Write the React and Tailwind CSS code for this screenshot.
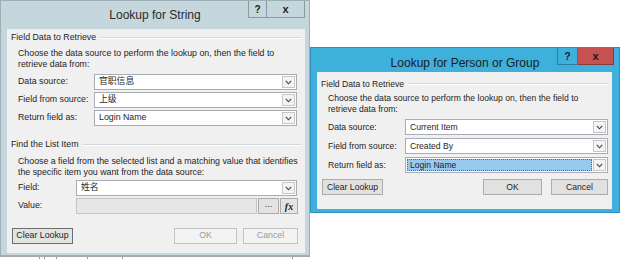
import React from 'react'

const sans = "font-['Liberation_Sans','Noto_Sans_CJK_SC',sans-serif]"

function Chevron() {
  return (
    <svg width="7" height="5" viewBox="0 0 7 5">
      <polyline points="0.8,0.8 3.5,3.8 6.2,0.8" fill="none" stroke="#404040" strokeWidth="1.1" />
    </svg>
  )
}

function Combo({ value, selected }) {
  return (
    <div className="flex-1 h-[16px] flex border border-[#a9acb2] bg-white">
      <div className="flex-1 flex items-center p-[1px]">
        <span
          className={
            selected
              ? 'h-full w-full flex items-center pl-[2px] bg-[#98c9f0] border border-dotted border-[#3d6f99]'
              : 'pl-[3px]'
          }
        >
          {value}
        </span>
      </div>
      <div className="w-[13px] my-[1px] mr-[1px] border border-[#c6c6c6] bg-[#f4f4f4] flex items-center justify-center">
        <Chevron />
      </div>
    </div>
  )
}

function Row({ label, labelW, children }) {
  return (
    <div className="h-[16px] flex items-center">
      <span className={`${labelW} shrink-0`}>{label}</span>
      {children}
    </div>
  )
}

function GroupHeader({ title }) {
  return (
    <div className="h-[12px] flex items-center gap-[4px]">
      <span className="whitespace-nowrap">{title}</span>
      <div className="flex-1 border-t border-[#d5d9dc] border-b border-b-white" />
    </div>
  )
}

function Btn({ children, w, kind }) {
  const look =
    kind === 'disabled'
      ? 'bg-[#f3f3f3] border-[#c3c3c3] text-[#9a9a9a]'
      : kind === 'focus'
        ? 'bg-[#e3e3e3] border-[#6e6e6e]'
        : 'bg-[#e1e1e1] border-[#acacac]'
  return <div className={`${w} h-[16px] border flex items-center justify-center ${look}`}>{children}</div>
}

function CaptionButtons({ active }) {
  return (
    <div className="flex items-start">
      <div
        className={`h-[17px] flex items-center justify-center border border-t-0 text-[10px] font-bold text-[#1a1a1a] ${
          active ? 'w-[21px] bg-[#3db0dc] border-[#2a7ea6]' : 'w-[19px] bg-[#c5d7dd] border-[#8a9ca3]'
        }`}
      >
        ?
      </div>
      <div
        className={`h-[17px] flex items-center justify-center border border-t-0 border-l-0 text-[11px] font-bold text-[#1a1a1a] ${
          active ? 'w-[36px] bg-[#c75050] border-[#8c3636]' : 'w-[38px] bg-[#c5d7dd] border-[#8a9ca3]'
        }`}
      >
        x
      </div>
    </div>
  )
}

function StringDialog() {
  return (
    <div className="w-[310px] h-[256px] bg-[#c5d7dd] border border-[#9cb0b7] flex flex-col">
      <div className="h-[28px] grid grid-cols-[1fr_auto_1fr]">
        <div />
        <div className="self-center text-[12px] text-[#2a2a2a]">Lookup for String</div>
        <div className="flex justify-end pr-[4px]">
          <CaptionButtons />
        </div>
      </div>
      <div className="flex-1 ml-[6px] mr-[4px] mb-[2px] bg-[#f0f0f0] flex flex-col text-[8.8px] text-[#1e1e1e]">
        <div className="mt-[3px] pl-[4px] pr-[3px]">
          <GroupHeader title="Field Data to Retrieve" />
        </div>
        <div className="mt-[4px] pl-[11px] leading-[11px] whitespace-nowrap">
          Choose the data source to perform the lookup on, then the field to
          <br />
          retrieve data from:
        </div>
        <div className="mt-[4px] pl-[11px] pr-[8px] flex flex-col gap-[2px]">
          <Row label="Data source:" labelW="w-[76px]">
            <Combo value="官职信息" />
          </Row>
          <Row label="Field from source:" labelW="w-[76px]">
            <Combo value="上级" />
          </Row>
          <Row label="Return field as:" labelW="w-[76px]">
            <Combo value="Login Name" />
          </Row>
        </div>
        <div className="mt-[13px] pl-[4px] pr-[3px]">
          <GroupHeader title="Find the List Item" />
        </div>
        <div className="mt-[5px] pl-[11px] leading-[11px] whitespace-nowrap">
          Choose a field from the selected list and a matching value that identifies
          <br />
          the specific item you want from the data source:
        </div>
        <div className="mt-[2px] pl-[11px] pr-[7px] flex flex-col gap-[2px]">
          <Row label="Field:" labelW="w-[58px]">
            <div className="flex-1 flex pr-[1px]">
              <Combo value="姓名" />
            </div>
          </Row>
          <Row label="Value:" labelW="w-[58px]">
            <div className="flex-1 flex gap-[1px]">
              <div className="flex-1 h-[16px] border border-[#c4c4c4] bg-[#e6e6e6]" />
              <div className="w-[21px] h-[16px] border border-[#acacac] bg-[#e3e3e3] flex items-center justify-center leading-none pb-[3px]">
                ...
              </div>
              <div className="w-[18px] h-[16px] border border-[#acacac] bg-[#e3e3e3] flex items-center justify-center font-['Liberation_Serif',serif] italic font-bold text-[10px]">
                fx
              </div>
            </div>
          </Row>
        </div>
        <div className="mt-[14px] pl-[5px] pr-[7px] flex">
          <Btn w="w-[61px]" kind="focus">Clear Lookup</Btn>
          <div className="flex-1" />
          <div className="flex gap-[6px]">
            <Btn w="w-[63px]" kind="disabled">OK</Btn>
            <Btn w="w-[55px]" kind="disabled">Cancel</Btn>
          </div>
        </div>
      </div>
    </div>
  )
}

function PersonDialog() {
  return (
    <div className="w-[310px] h-[166px] bg-[#3db0dc] border border-[#2c8ebd] flex flex-col">
      <div className="h-[24px] grid grid-cols-[1fr_auto_1fr]">
        <div />
        <div className="self-center pt-[6px] text-[12px] text-[#1c1c1c]">Lookup for Person or Group</div>
        <div className="flex justify-end pr-[5px]">
          <CaptionButtons active />
        </div>
      </div>
      <div className="flex-1 ml-[6px] mr-[7px] mb-[3px] bg-[#f0f0f0] flex flex-col text-[8.6px] text-[#1e1e1e]">
        <div className="mt-[6px] pl-[4px] pr-[4px]">
          <GroupHeader title="Field Data to Retrieve" />
        </div>
        <div className="mt-[3px] pl-[11px] leading-[11px] whitespace-nowrap">
          Choose the data source to perform the lookup on, then the field to
          <br />
          retrieve data from:
        </div>
        <div className="mt-[4px] pl-[11px] pr-[4px] flex flex-col gap-[3px]">
          <Row label="Data source:" labelW="w-[77px]">
            <Combo value="Current Item" />
          </Row>
          <Row label="Field from source:" labelW="w-[77px]">
            <Combo value="Created By" />
          </Row>
          <Row label="Return field as:" labelW="w-[77px]">
            <Combo value="Login Name" selected />
          </Row>
        </div>
        <div className="mt-[6px] pl-[5px] pr-[4px] flex">
          <Btn w="w-[61px]">Clear Lookup</Btn>
          <div className="flex-1" />
          <div className="flex gap-[9px]">
            <Btn w="w-[59px]">OK</Btn>
            <Btn w="w-[57px]">Cancel</Btn>
          </div>
        </div>
      </div>
    </div>
  )
}

export default function App() {
  return (
    <div className={`w-[624px] h-[259px] bg-white overflow-hidden flex ${sans}`}>
      <div className="flex flex-col">
        <StringDialog />
        <div className="h-[3px] flex border-t border-[#a8a8a8]">
          <div className="w-[40px] border-r border-[#9a9a9a]" />
          <div className="w-[5px] border-r border-[#9a9a9a]" />
          <div className="w-[12px] border-r border-[#9a9a9a]" />
          <div className="w-[31px] border-r border-[#9a9a9a]" />
          <div className="w-[35px] border-r border-[#9a9a9a]" />
          <div className="w-[170px] border-r border-[#9a9a9a]" />
        </div>
      </div>
      <div className="mt-[47px]">
        <PersonDialog />
      </div>
    </div>
  )
}
